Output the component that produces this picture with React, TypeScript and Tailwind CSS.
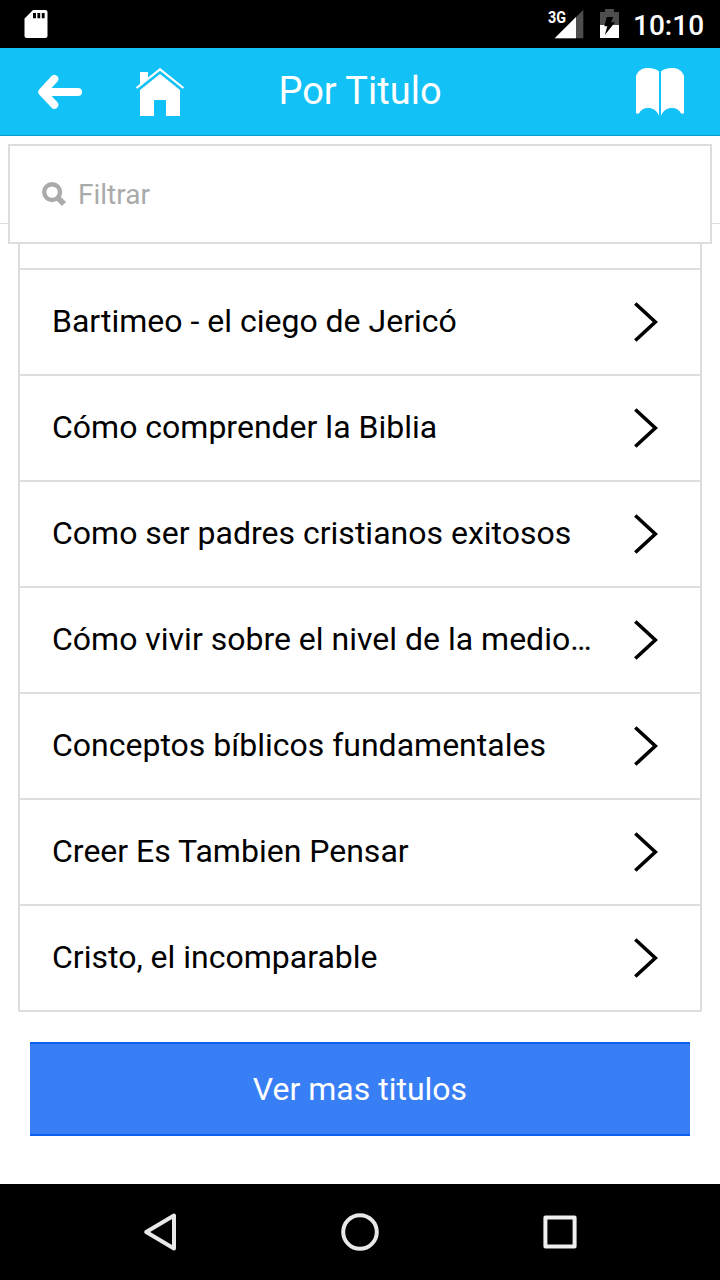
const titles = [
  "Bartimeo - el ciego de Jericó",
  "Cómo comprender la Biblia",
  "Como ser padres cristianos exitosos",
  "Cómo vivir sobre el nivel de la medio…",
  "Conceptos bíblicos fundamentales",
  "Creer Es Tambien Pensar",
  "Cristo, el incomparable",
];

function StatusBar() {
  return (
    <div className="flex h-12 shrink-0 items-center bg-black pr-4 pl-6 text-white">
      <svg className="h-12 w-6" viewBox="24 0 24 48">
        <path
          fill="#fff"
          fillRule="evenodd"
          d="M33 10H45.5Q47.5 10 47.5 12V36Q47.5 38 45.5 38H26.5Q24.5 38 24.5 36V18.5ZM33 13V18.3H36V13ZM37.4 13V18.3H40.2V13ZM41.8 13V18.3H44.6V13Z"
        />
      </svg>
      <div className="flex-1" />
      <svg className="h-12 w-[74px]" viewBox="546 0 74 48">
        <path fill="#4d4d4d" d="M583.3 9.7V38.3H555Z" />
        <path fill="#fff" d="M576 17V38.3H554.7Z" />
        <text x="548" y="22.8" textLength="18" lengthAdjust="spacingAndGlyphs" fill="#fff" fontSize="16.5" fontWeight="700" fontFamily="Roboto, sans-serif">
          3G
        </text>
        <path fill="#4d4d4d" d="M600 12H605V9H614V12H619V25H600Z" />
        <path fill="#fff" d="M600 25H619V38H600Z" />
        <path fill="#000" d="M606.8 17H613.2L611 22.3H615L604.8 35L607.3 26.3H604.3Z" />
      </svg>
      <span className="ml-[13px] w-[71px] pt-[3px] text-[28px] leading-[45px] font-medium whitespace-nowrap">10:10</span>
    </div>
  );
}

function Header() {
  return (
    <header className="flex h-[88px] shrink-0 items-center justify-between border-b border-[#0c9dce] bg-[#12c1f5] px-9 text-white">
      <div className="flex w-[150px] items-center gap-[51px]">
        <svg className="h-[48px] w-[48px] shrink-0" viewBox="36 68 48 48">
          <path d="M54.3 79L42.3 92L54.3 104.8M43 92H78" fill="none" stroke="#fff" strokeWidth="8" strokeLinecap="round" strokeLinejoin="round" />
        </svg>
        <svg className="h-[48px] w-[50px] shrink-0" viewBox="135 68 50 48">
          <path fill="#fff" d="M140 72H148V79.2L140 85.6ZM160 74L180 90V116H166V100H154V116H140V90Z" />
          <path d="M136.6 88L160 69.3L183.4 88" fill="none" stroke="#fff" strokeWidth="2.2" />
        </svg>
      </div>
      <h1 className="pb-[2px] text-[38px] leading-[84px] font-normal whitespace-nowrap">Por Titulo</h1>
      <div className="flex w-[150px] justify-end">
        <svg className="h-[48px] w-[48px]" viewBox="636 68 48 48">
          <path fill="#fff" d="M636 76C638 70.5 642 68 648 68C653 68 657 69.3 659 71.5V116C657 110.5 653 108 648 108C643.5 108 640.5 110 639 113.5H636Z" />
          <path fill="#fff" d="M684 76C682 70.5 678 68 672 68C667 68 663 69.3 661 71.5V116C663 110.5 667 108 672 108C676.5 108 679.5 110 681 113.5H684Z" />
        </svg>
      </div>
    </header>
  );
}

function FilterBar() {
  return (
    <div className="relative z-10 h-[88px] shrink-0 border-b border-[#ddd] px-2 pt-2">
      <label className="flex h-[100px] items-center gap-3 border-2 border-[#ddd] bg-white px-8 text-[28px] text-[#aaa]">
        <svg className="h-6 w-6" viewBox="0 0 24 24" fill="none" stroke="#aaa">
          <circle cx="10.1" cy="10.1" r="7.9" strokeWidth="4.4" />
          <path d="M15 15L22 22" strokeWidth="5.6" />
        </svg>
        <span className="pt-[2px]">Filtrar</span>
      </label>
    </div>
  );
}

export default function App() {
  return (
    <div className="flex h-[1280px] w-[720px] flex-col overflow-hidden bg-white font-['Roboto',sans-serif]">
      <StatusBar />
      <Header />
      <FilterBar />
      <main className="flex min-h-0 flex-1 flex-col">
        <ul className="mx-[18px] border-x-2 border-[#ddd]">
          <li className="h-[46px] border-b-2 border-[#ddd]" />
          {titles.map((title) => (
            <li key={title} className="flex h-[106px] items-center justify-between border-b-2 border-[#ddd] pr-[42px] pl-8">
              <span className="pb-[2px] text-[32px] leading-[48px] whitespace-nowrap text-black">{title}</span>
              <svg className="h-10 w-6 shrink-0" viewBox="0 0 24 40" fill="none" stroke="#000" strokeWidth="3.6">
                <path d="M1.3 1.5L21.3 20L1.3 38.5" />
              </svg>
            </li>
          ))}
        </ul>
        <button className="mx-[30px] mt-[30px] h-[94px] border-y-2 border-[#0c60ee] bg-[#387ef5] text-[32px] text-white">
          Ver mas titulos
        </button>
      </main>
      <nav className="flex h-24 shrink-0 items-center justify-between bg-black px-[140px]">
        <svg className="h-10 w-10" viewBox="0 0 40 40" fill="none" stroke="#e8e8e8" strokeWidth="4" strokeLinejoin="round">
          <path d="M6.2 20L34 3.5V36.5Z" />
        </svg>
        <svg className="h-10 w-10" viewBox="0 0 40 40" fill="none" stroke="#e8e8e8" strokeWidth="4">
          <circle cx="20" cy="20" r="16.8" />
        </svg>
        <svg className="h-10 w-10" viewBox="0 0 40 40" fill="none" stroke="#efefef" strokeWidth="4" strokeLinejoin="round">
          <path d="M5.4 5.4H34.6V34.6H5.4Z" />
        </svg>
      </nav>
    </div>
  );
}
